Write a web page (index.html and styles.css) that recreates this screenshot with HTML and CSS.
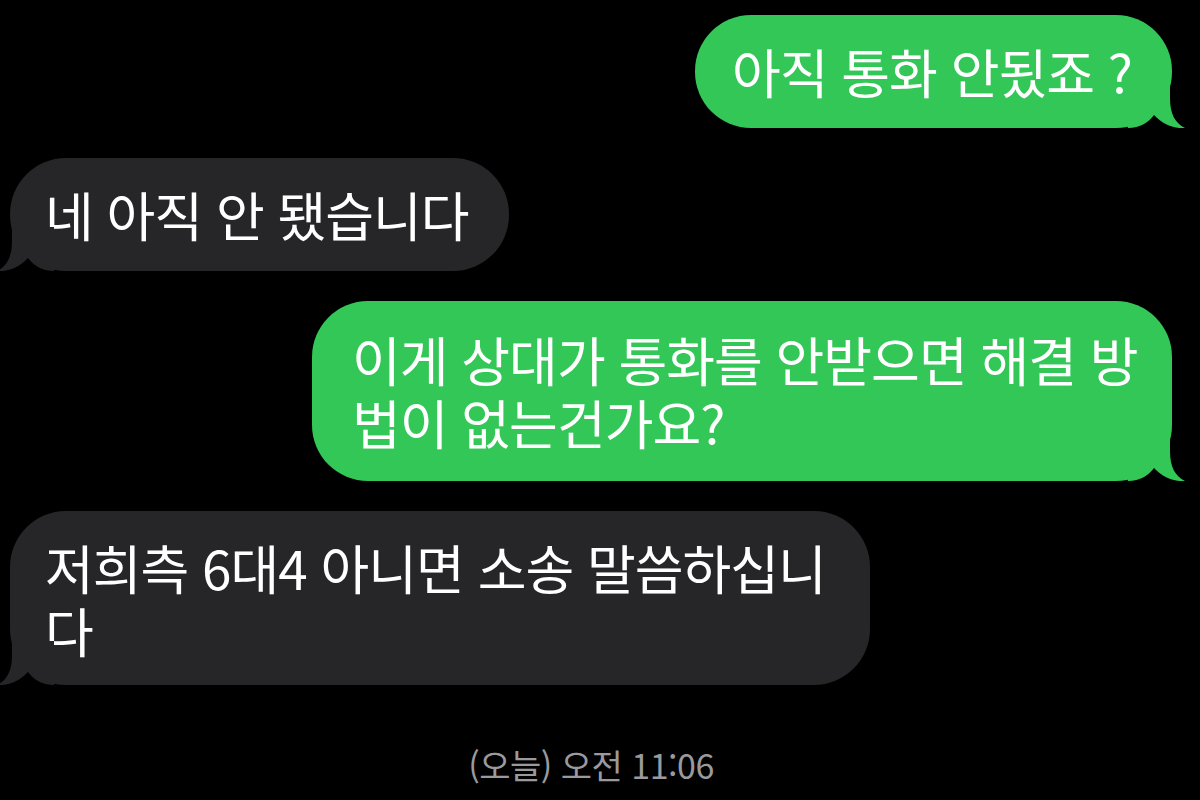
FILE: index.html
```html
<!DOCTYPE html>
<html lang="ko">
<head>
<meta charset="utf-8">
<link rel="stylesheet" href="styles.css">
</head>
<body>
<div class="chat">
  <div class="row sent">
    <div class="bubble green b1">아직 통화 안됬죠 ?<svg class="tail" viewBox="0 0 60 44"><path d="M0 0 H42 V14 C42 30 47 39 57 44 C48 45 35 41 26 31 C21 38 12 44 0 44 Z"/></svg></div>
  </div>
  <div class="row recv">
    <div class="bubble gray b2">네 아직 안 됐습니다<svg class="tail" viewBox="0 0 60 44"><path d="M0 0 H42 V14 C42 30 47 39 57 44 C48 45 35 41 26 31 C21 38 12 44 0 44 Z"/></svg></div>
  </div>
  <div class="row sent">
    <div class="bubble green b3">이게 상대가 통화를 안받으면 해결 방법이 없는건가요?<svg class="tail" viewBox="0 0 60 44"><path d="M0 0 H42 V14 C42 30 47 39 57 44 C48 45 35 41 26 31 C21 38 12 44 0 44 Z"/></svg></div>
  </div>
  <div class="row recv">
    <div class="bubble gray b4">저희측 6대4 아니면 소송 말씀하십니다<svg class="tail" viewBox="0 0 60 44"><path d="M0 0 H42 V14 C42 30 47 39 57 44 C48 45 35 41 26 31 C21 38 12 44 0 44 Z"/></svg></div>
  </div>
  <div class="stamp">(오늘) 오전 11:06</div>
</div>
</body>
</html>
```
FILE: styles.css
```css
html, body {
  margin: 0;
  padding: 0;
  background: #000;
}
body {
  width: 1200px;
  height: 800px;
  overflow: hidden;
  font-family: "Noto Sans CJK KR", "Noto Sans", sans-serif;
}
.chat {
  display: flex;
  flex-direction: column;
  gap: 30px;
  padding: 15px 28px 0 10px;
}
.row {
  display: flex;
}
.row.sent { justify-content: flex-end; }
.row.recv { justify-content: flex-start; }
.bubble {
  position: relative;
  color: #fff;
  font-size: 53px;
  line-height: 63px;
  padding: 25px 40px 25px 37px;
  border-radius: 56px;
  word-break: break-all;
  letter-spacing: -1px;
}
.green { background: #33c758; }
.gray { background: #262628; }
.b2 { padding-left: 35px; }
.b3 { width: 800px; padding: 27px 20px 27px 40px; }
.b4 { width: 800px; padding: 25px 25px 23px 35px; }
.tail {
  position: absolute;
  bottom: 0;
  width: 60px;
  height: 44px;
}
.green .tail { right: -16px; fill: #33c758; }
.gray .tail { left: -16px; fill: #262628; transform: scaleX(-1); }
.stamp {
  margin-top: 30px;
  text-align: center;
  color: #9a9a9e;
  font-size: 34px;
  line-height: 40px;
  letter-spacing: -0.5px;
}
```
